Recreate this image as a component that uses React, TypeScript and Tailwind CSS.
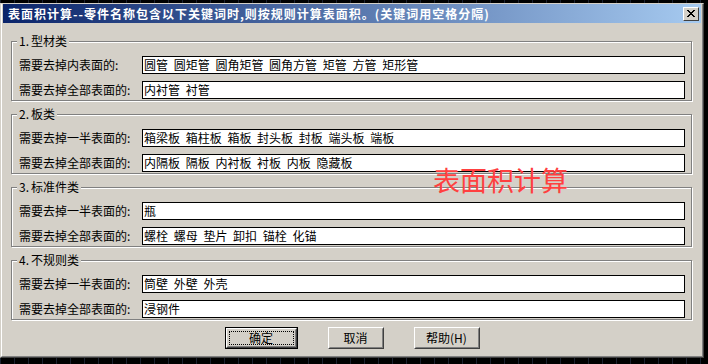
import React from "react";

const font = "font-['SimSun','Noto_Sans_CJK_SC',sans-serif]";

function Row({ label, value }: { label: string; value: string }) {
  return (
    <div className="flex items-center h-[18px]">
      <div className="w-[123px] text-[12px] leading-[18px] text-black whitespace-nowrap">{label}</div>
      <div className="flex-1 h-[18px] bg-white border border-black px-[1px] text-[12px] leading-[16px] text-black whitespace-pre overflow-hidden [word-spacing:3px]">
        {value}
      </div>
    </div>
  );
}

function Group({ num, title, rows }: { num: string; title: string; rows: [string, string][] }) {
  return (
    <div className="relative w-[681px] h-[60px] border border-[#808080] shadow-[inset_1px_1px_0_#ffffff,1px_1px_0_#ffffff] pt-[14px] pl-[7px] pr-[6px] flex flex-col gap-[7px]">
      <div className="absolute left-[5px] top-[-8px] px-[2px] bg-[#d4d0c8] text-[12px] leading-[14px] text-black whitespace-nowrap flex">
        <span className="inline-block w-[12px]">{num}</span>
        <span>{title}</span>
      </div>
      {rows.map(([l, v], i) => (
        <Row key={i} label={l} value={v} />
      ))}
    </div>
  );
}

function Btn({ children, w, def }: { children: React.ReactNode; w: string; def?: boolean }) {
  if (def) {
    return (
      <div className={`${w} h-[22px] border border-black`}>
        <div className="w-full h-full border border-t-white border-l-white border-r-[#404040] border-b-[#404040] bg-[#d4d0c8]">
          <div className="w-full h-full border border-t-[#d4d0c8] border-l-[#d4d0c8] border-r-[#808080] border-b-[#808080] p-[1px]">
            <div className="w-full h-full border border-dotted border-black flex items-center justify-center text-[12px] leading-[12px] text-black">
              {children}
            </div>
          </div>
        </div>
      </div>
    );
  }
  return (
    <div className={`${w} h-[22px] border border-t-white border-l-white border-r-[#404040] border-b-[#404040] bg-[#d4d0c8]`}>
      <div className="w-full h-full border border-t-[#d4d0c8] border-l-[#d4d0c8] border-r-[#808080] border-b-[#808080] flex items-center justify-center text-[12px] leading-[12px] text-black">
        {children}
      </div>
    </div>
  );
}

export default function App() {
  return (
    <div
      className={`relative w-[708px] h-[364px] bg-black pt-[3px] overflow-hidden ${font} bg-[repeating-linear-gradient(90deg,#1c2230_0px,#1c2230_1px,transparent_1px,transparent_14px)]`}
    >
      <div className="w-[704px] h-[355px] border border-t-[#d4d0c8] border-l-[#d4d0c8] border-r-[#404040] border-b-[#404040] bg-[#d4d0c8]">
        <div className="w-full h-full border-l border-l-white border-r border-r-[#808080] border-b border-b-[#808080] px-[1px] flex flex-col">
          {/* Title bar */}
          <div className="h-[19px] flex items-center justify-between bg-[linear-gradient(90deg,#0a246a,#a6caf0)] pl-[5px] pr-[2px]">
            <div className="text-white font-bold text-[12px] leading-[14px] tracking-[1px] whitespace-nowrap">
              表面积计算--零件名称包含以下关键词时,则按规则计算表面积。(关键词用空格分隔)
            </div>
            <div className="w-[16px] h-[14px] bg-[#d4d0c8] border border-t-white border-l-white border-r-[#404040] border-b-[#404040] flex items-center justify-center">
              <svg width="8" height="7" viewBox="0 0 8 7" shapeRendering="crispEdges">
                <path d="M0 0h2v1h-2zM6 0h2v1h-2zM1 1h2v1h-2zM5 1h2v1h-2zM2 2h4v1h-4zM3 3h2v1h-2zM2 4h4v1h-4zM1 5h2v1h-2zM5 5h2v1h-2zM0 6h2v1h-2zM6 6h2v1h-2z" fill="#000" />
              </svg>
            </div>
          </div>

          {/* Body */}
          <div className="flex flex-col pl-[8px] pt-[18px] gap-[13px]">
            <Group
              num="1."
              title="型材类"
              rows={[
                ["需要去掉内表面的:", "圆管 圆矩管 圆角矩管 圆角方管 矩管 方管 矩形管"],
                ["需要去掉全部表面的:", "内衬管 衬管"],
              ]}
            />
            <Group
              num="2."
              title="板类"
              rows={[
                ["需要去掉一半表面的:", "箱梁板 箱柱板 箱板 封头板 封板 端头板 端板"],
                ["需要去掉全部表面的:", "内隔板 隔板 内衬板 衬板 内板 隐藏板"],
              ]}
            />
            <Group
              num="3."
              title="标准件类"
              rows={[
                ["需要去掉一半表面的:", "瓶"],
                ["需要去掉全部表面的:", "螺栓 螺母 垫片 卸扣 锚栓 化锚"],
              ]}
            />
            <Group
              num="4."
              title="不规则类"
              rows={[
                ["需要去掉一半表面的:", "筒壁 外壁 外壳"],
                ["需要去掉全部表面的:", "浸钢件"],
              ]}
            />
          </div>

          {/* Buttons */}
          <div className="flex justify-center gap-[30px] mt-[7px]">
            <Btn w="w-[73px]" def>确定</Btn>
            <Btn w="w-[56px]">取消</Btn>
            <Btn w="w-[66px]">帮助(H)</Btn>
          </div>
        </div>
      </div>

      <div className="absolute left-[433px] top-[164px] text-[27px] leading-[32px] text-[#ff4040] whitespace-nowrap">
        表面积计算
      </div>
    </div>
  );
}
